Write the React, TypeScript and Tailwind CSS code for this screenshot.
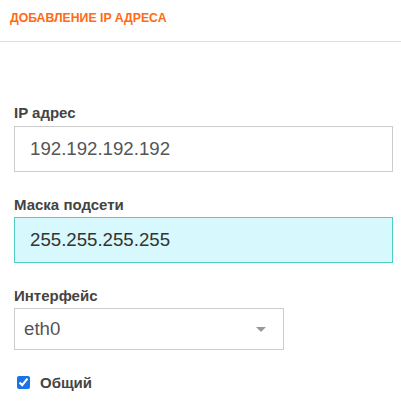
export default function App() {
  return (
    <div className="w-[401px] h-[405px] bg-white font-['Liberation_Sans',Arial,sans-serif]">
      <div className="h-[42px] border-b border-[#dddddd] px-[10px] pt-[11px]">
        <h1 className="text-[12.25px] leading-[14px] font-bold uppercase text-[#ff6a13]">
          Добавление IP адреса
        </h1>
      </div>

      <div className="pl-[14px] pr-[8px] pt-[62px]">
        <label className="block text-[15px] leading-[17px] font-bold text-[#444444]">IP адрес</label>
        <input
          className="mt-[5px] block w-full h-[46px] border border-[#cccccc] px-[15px] text-[18.67px] text-[#555555] outline-none"
          defaultValue="192.192.192.192"
        />

        <label className="mt-[24px] block text-[15px] leading-[17px] font-bold text-[#444444]">Маска подсети</label>
        <input
          className="mt-[4px] block w-full h-[46px] border border-[#4ecdc0] bg-[#d7f8fc] px-[15px] text-[18.67px] text-[#333333] outline-none"
          defaultValue="255.255.255.255"
        />

        <label className="mt-[24px] block text-[15px] leading-[17px] font-bold text-[#444444]">Интерфейс</label>
        <div className="mt-[4px] w-[270px] h-[42px] border border-[#cccccc] flex items-center justify-between pl-[9px] pr-[17px]">
          <span className="text-[18.67px] text-[#555555]">eth0</span>
          <svg width="10" height="5" viewBox="0 0 10 5">
            <path d="M0 0 L10 0 L5 5 Z" fill="#999999" />
          </svg>
        </div>

        <label className="mt-[24px] flex items-center gap-[10px] pl-[3px] h-[17px]">
          <input type="checkbox" defaultChecked className="w-[13px] h-[13px] accent-[#1a73e8] m-0" />
          <span className="text-[15px] leading-[17px] font-bold text-[#444444]">Общий</span>
        </label>
      </div>
    </div>
  );
}
